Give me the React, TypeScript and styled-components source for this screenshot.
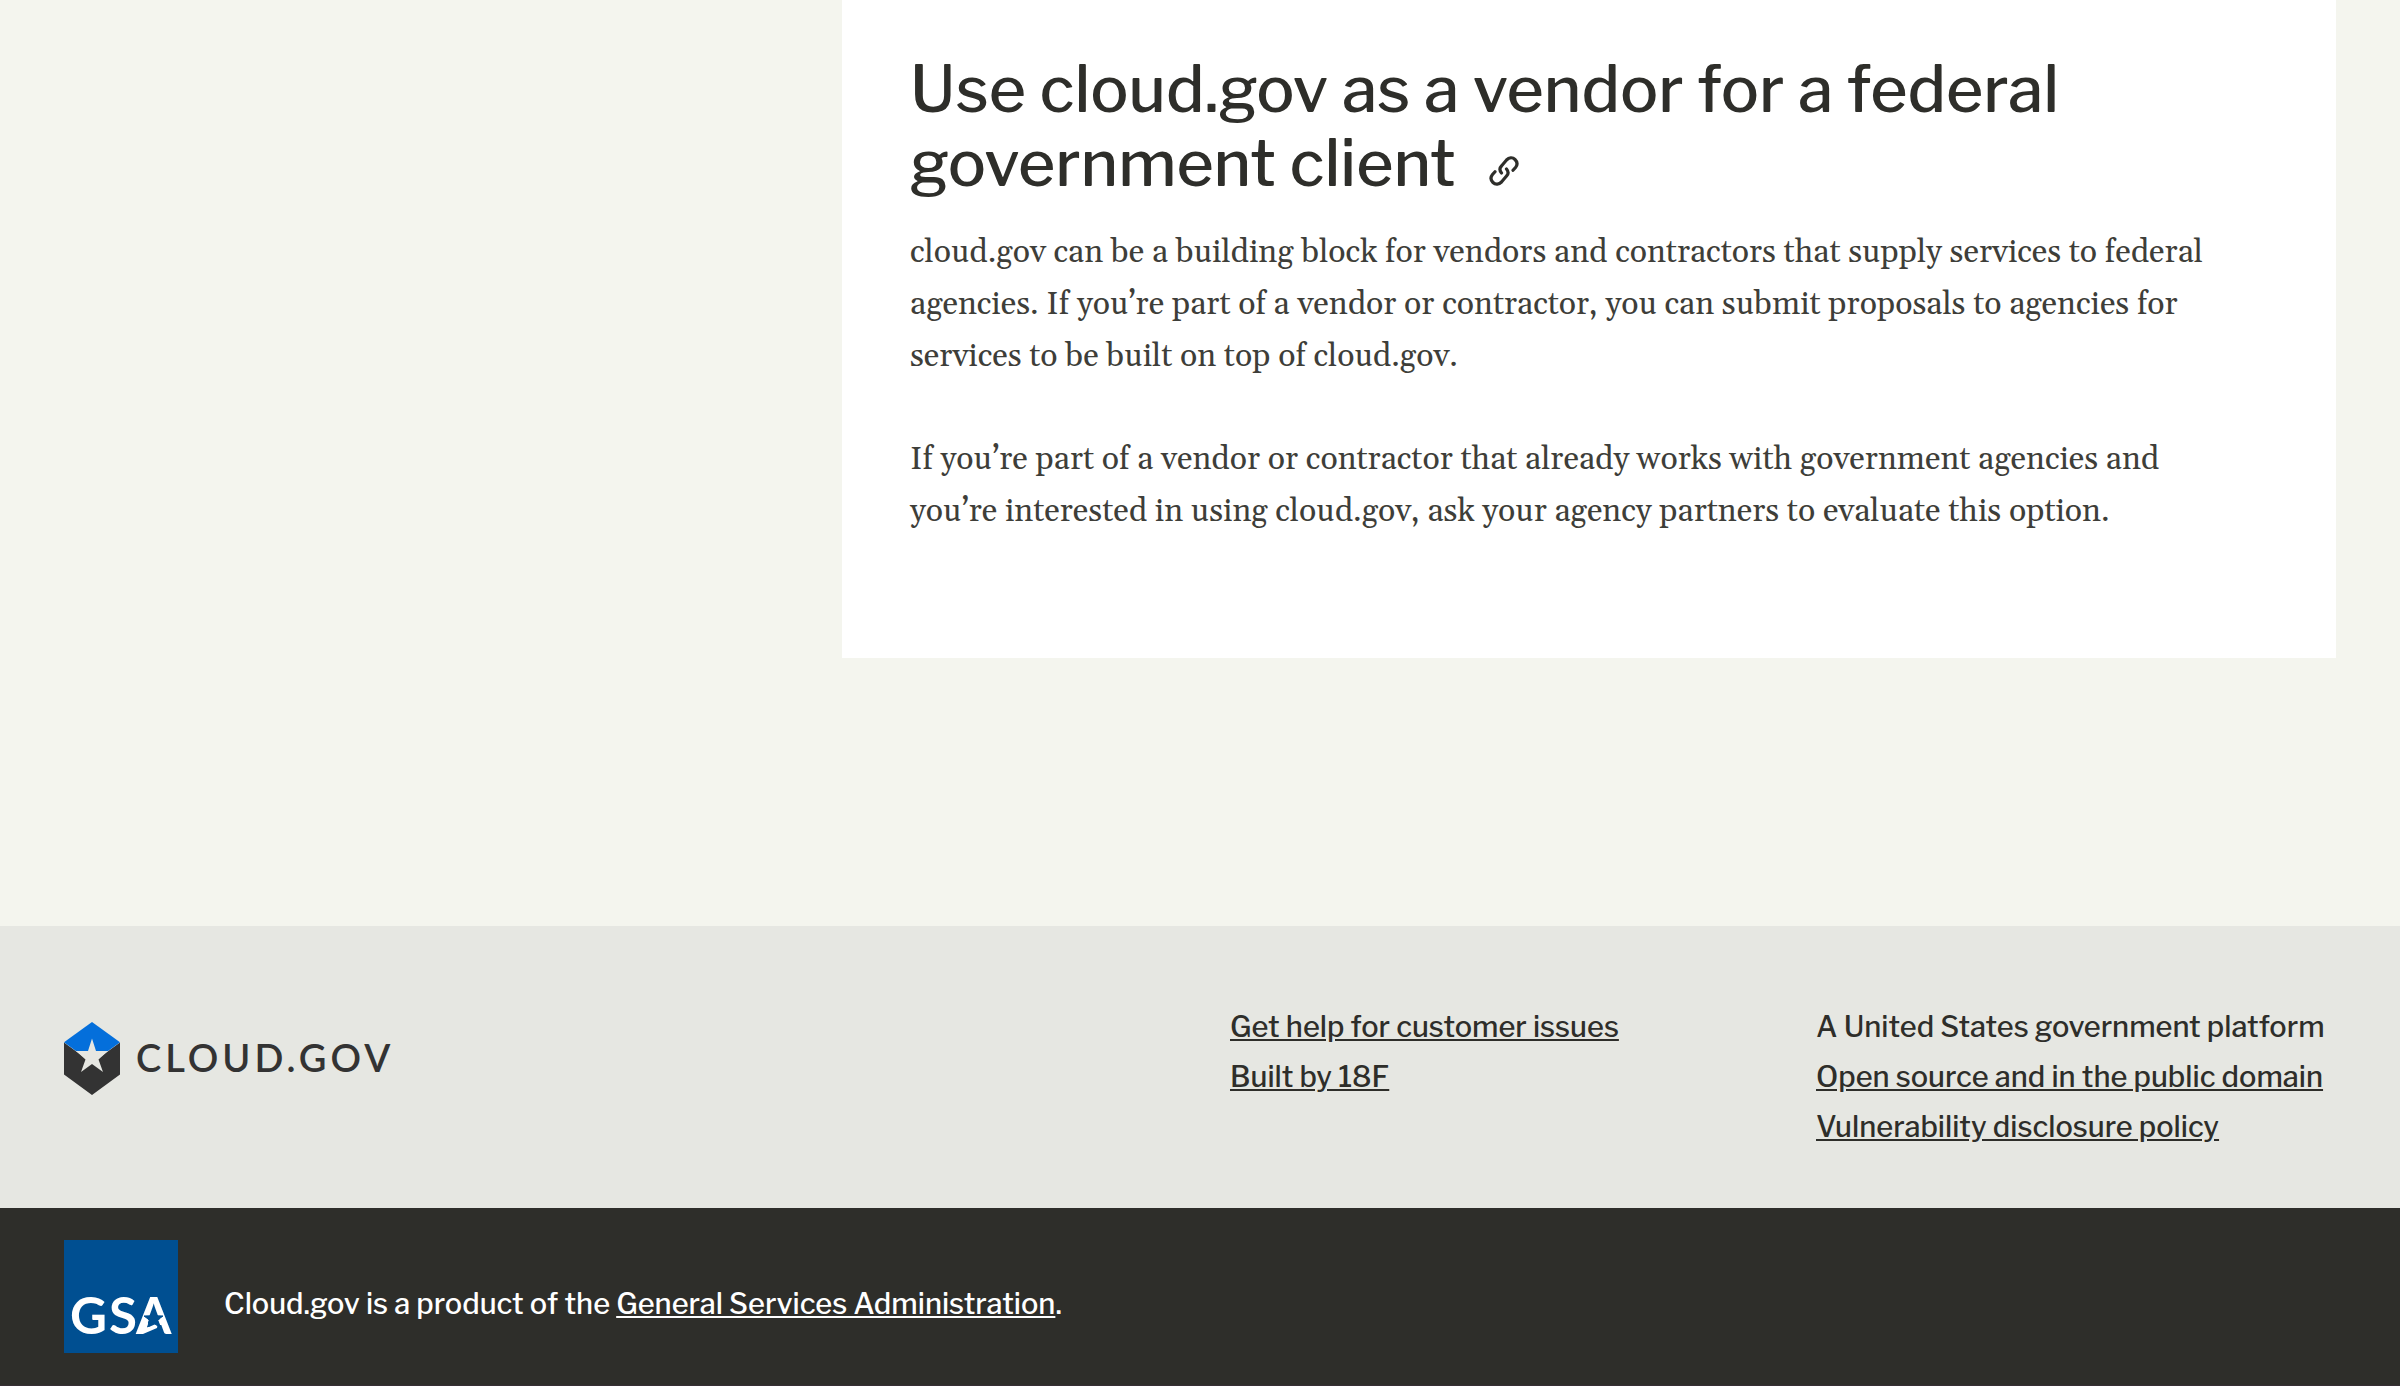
import React from 'react';
import styled, { createGlobalStyle } from 'styled-components';

const sans = '"Libre Franklin", "Open Sans", sans-serif';
const serif = '"Gelasio", "Liberation Serif", serif';

const colors = {
  page: '#f4f5ee',
  card: '#ffffff',
  footer: '#e6e7e2',
  dark: '#2e2e2a',
  edge: '#372f35',
  body: '#3e3e39',
  blue: '#046fdb',
  logo: '#333333',
  gsa: '#004f91',
};

const GlobalStyle = createGlobalStyle`
  *, *::before, *::after { box-sizing: border-box; }
  body {
    margin: 0;
    background: ${colors.page};
    color: ${colors.dark};
    font-family: ${sans};
  }
`;

const Main = styled.main`
  display: grid;
  grid-template-columns: 778fr 1494fr;
  padding: 0 64px 268px;
`;

const Article = styled.article`
  grid-column: 2;
  padding: 52px 68px 120px;
  background: ${colors.card};
`;

const Heading = styled.h2`
  margin: 0 0 27px;
  font-size: 64px;
  font-weight: 500;
  line-height: 74px;
`;

const AnchorLink = styled.a`
  display: inline-block;
  margin-left: 20px;
  color: ${colors.dark};
  line-height: 30px;
`;

const Paragraph = styled.p`
  max-width: 1320px;
  margin: 0;
  color: ${colors.body};
  font-family: ${serif};
  font-size: 32px;
  line-height: 52px;

  & + & {
    margin-top: 51px;
  }
`;

const SiteFooter = styled.footer`
  display: grid;
  grid-template-columns: 1166fr 586fr 520fr;
  padding: 76px 64px 56px;
  background: ${colors.footer};
`;

const Brand = styled.a`
  display: flex;
  align-items: center;
  align-self: start;
  justify-self: start;
  gap: 16px;
  margin-top: 20px;
  color: ${colors.logo};
  text-decoration: none;
`;

const Wordmark = styled.span`
  padding-bottom: 4px;
  font-family: Lato, sans-serif;
  font-size: 38px;
  font-weight: 600;
  line-height: 40px;
  letter-spacing: 4px;
`;

const LinkList = styled.ul`
  margin: 0;
  padding: 0;
  list-style: none;
  font-size: 29px;
  font-weight: 500;
  line-height: 50px;
  white-space: nowrap;
`;

const TextLink = styled.a`
  color: inherit;
  text-decoration: underline;
`;

const AgencyBar = styled.section`
  display: flex;
  align-items: center;
  gap: 46px;
  padding: 32px 64px;
  border-bottom: 1px solid ${colors.edge};
  background: ${colors.dark};
  color: #ffffff;
`;

const AgencyText = styled.p`
  margin: 0;
  padding-top: 14px;
  font-size: 29px;
  font-weight: 500;
  line-height: 50px;
`;

const ChainIcon = () => (
  <svg width="30" height="30" viewBox="0 0 30 30" fill="none" stroke="currentColor" strokeWidth="3.2" strokeLinecap="round" aria-hidden="true">
    <path d="M12.5 17C10 14 10.5 12 12.5 10L17.5 4C20 1.5 23.5 1 26 3.5C28.5 6 28.5 9 26.5 11.5L24 14.3" />
    <path d="M17.5 13C20 16 19.5 18 17.5 20L12.5 26C10 28.5 6.5 29 4 26.5C1.5 24 1.5 21 3.5 18.5L6 15.7" />
  </svg>
);

const CloudMark = () => (
  <svg width="56" height="73" viewBox="0 0 56 73" aria-hidden="true">
    <path d="M0 20.5L28 41L56 20.5V52.5L28 73L0 52.5Z" fill={colors.logo} />
    <path d="M28 0L56 20.3L44 29H12L0 20.3Z" fill={colors.blue} />
    <path d="M28 16.5L32 29H44L34.5 37.5L39 50L28 42L17 50L21.5 37.5L12 29H24Z" fill={colors.footer} />
  </svg>
);

const GsaMark = () => (
  <svg width="114" height="113" viewBox="0 0 114 113" role="img" aria-label="GSA">
    <rect width="114" height="113" fill={colors.gsa} />
    <text x="6 45 72" y="94" fill="#ffffff" fontFamily="Lato, sans-serif" fontSize="51" fontWeight="700">GSA</text>
    <path d="M89.5 68L100 95H79Z" fill={colors.gsa} />
    <path d="M73 94L82 76L85 87L94 83L93 88L79 94Z" fill="#ffffff" />
    <path d="M89.5 69L91.9 75.8L99 76L93.3 80.2L95.4 87L89.5 83L83.6 87L85.7 80.2L80 76L87.2 75.8Z" fill={colors.gsa} stroke={colors.gsa} />
  </svg>
);

export default function App() {
  return (
    <>
      <GlobalStyle />
      <Main>
        <Article>
          <Heading id="vendors">
            Use cloud.gov as a vendor for a federal government client{' '}
            <AnchorLink href="#vendors" aria-label="Link to this section">
              <ChainIcon />
            </AnchorLink>
          </Heading>
          <Paragraph>
            cloud.gov can be a building block for vendors and contractors that supply services to federal agencies. If
            you’re part of a vendor or contractor, you can submit proposals to agencies for services to be built on top
            of cloud.gov.
          </Paragraph>
          <Paragraph>
            If you’re part of a vendor or contractor that already works with government agencies and you’re interested
            in using cloud.gov, ask your agency partners to evaluate this option.
          </Paragraph>
        </Article>
      </Main>
      <SiteFooter>
        <Brand href="#home">
          <CloudMark />
          <Wordmark>CLOUD.GOV</Wordmark>
        </Brand>
        <LinkList>
          <li><TextLink href="#help">Get help for customer issues</TextLink></li>
          <li><TextLink href="#18f">Built by 18F</TextLink></li>
        </LinkList>
        <LinkList>
          <li>A United States government platform</li>
          <li><TextLink href="#open-source">Open source and in the public domain</TextLink></li>
          <li><TextLink href="#disclosure">Vulnerability disclosure policy</TextLink></li>
        </LinkList>
      </SiteFooter>
      <AgencyBar>
        <GsaMark />
        <AgencyText>
          Cloud.gov is a product of the <TextLink href="#gsa">General Services Administration</TextLink>.
        </AgencyText>
      </AgencyBar>
    </>
  );
}
